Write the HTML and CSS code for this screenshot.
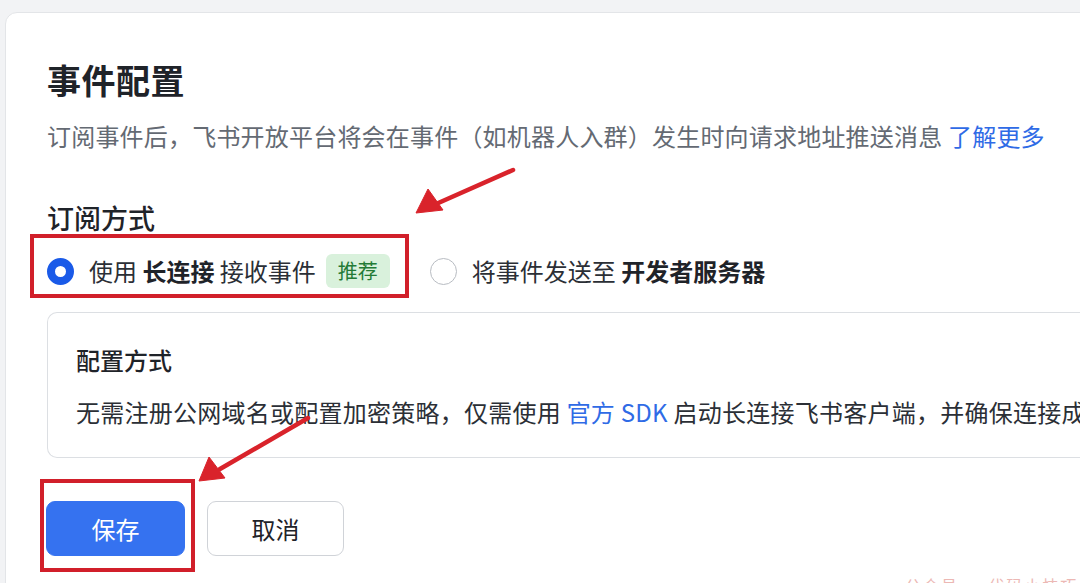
FILE: index.html
```html
<!DOCTYPE html>
<html lang="zh-CN">
<head>
<meta charset="utf-8">
<link rel="stylesheet" href="styles.css">
</head>
<body>
<div class="page">
  <div class="card">
    <h1 class="title">事件配置</h1>
    <p class="desc">订阅事件后，飞书开放平台将会在事件（如机器人入群）发生时向请求地址推送消息 <a class="link">了解更多</a></p>
    <h2 class="section">订阅方式</h2>
    <div class="radios">
      <label class="option">
        <span class="radio checked"></span>
        <span class="label">使用 <b>长连接</b> 接收事件</span>
        <span class="tag">推荐</span>
      </label>
      <label class="option">
        <span class="radio"></span>
        <span class="label">将事件发送至 <b>开发者服务器</b></span>
      </label>
    </div>
    <div class="panel">
      <div class="panel-title">配置方式</div>
      <div class="panel-text">无需注册公网域名或配置加密策略，仅需使用 <a class="link">官方 SDK</a> 启动长连接飞书客户端，并确保连接成</div>
    </div>
    <div class="actions">
      <button class="btn primary">保存</button>
      <button class="btn">取消</button>
    </div>
  </div>
</div>

<div class="mark mark-radio"></div>
<div class="mark mark-save"></div>
<svg class="arrows" width="1080" height="583" viewBox="0 0 1080 583">
  <g fill="#d9232b" stroke="#d9232b">
    <line x1="513" y1="170" x2="436" y2="204" stroke-width="4.5" stroke-linecap="round"/>
    <polygon points="416,213 428,189 443,210" stroke-width="1" stroke-linejoin="round"/>
    <line x1="308" y1="418" x2="220" y2="469" stroke-width="4.5" stroke-linecap="round"/>
    <polygon points="199,481 209,457 225,478" stroke-width="1" stroke-linejoin="round"/>
  </g>
</svg>
<div class="watermark">公众号 · 代码小技巧</div>
</body>
</html>
```

FILE: styles.css
```css
html, body {
  margin: 0;
  padding: 0;
}
body {
  width: 1080px;
  height: 583px;
  overflow: hidden;
  background: #f2f3f5;
  font-family: "Noto Sans CJK SC", "Noto Sans", sans-serif;
  color: #1f2329;
  position: relative;
}
.page {
  padding: 12px 0 0 5px;
}
.card {
  width: 1200px;
  height: 640px;
  box-sizing: border-box;
  background: #fff;
  border: 1px solid #e3e5e8;
  border-radius: 12px 0 0 0;
  padding: 47px 0 0 41px;
}
.title {
  margin: 0;
  font-size: 34px;
  line-height: 40px;
  font-weight: 600;
  color: #1f2329;
  letter-spacing: 0.5px;
}
.desc {
  margin: 20px 0 0;
  font-size: 24px;
  line-height: 32px;
  color: #646a73;
  white-space: nowrap;
  letter-spacing: 0.2px;
}
.link {
  color: #2f6be6;
  text-decoration: none;
}
.section {
  margin: 49px 0 0;
  font-size: 27px;
  line-height: 34px;
  font-weight: 500;
  color: #1f2329;
}
.radios {
  margin-top: 18px;
  display: flex;
  align-items: center;
  gap: 40px;
  height: 36px;
}
.option {
  display: flex;
  align-items: center;
}
.radio {
  width: 27px;
  height: 27px;
  box-sizing: border-box;
  border-radius: 50%;
  border: 1.5px solid #b8bcc2;
  background: #fff;
  margin-right: 15px;
  flex: none;
}
.radio.checked {
  border: 8px solid #1a5ae8;
}
.label {
  font-size: 24px;
  line-height: 32px;
  color: #2b2f36;
  white-space: nowrap;
}
.label b {
  font-weight: 700;
  color: #1f2329;
}
.tag {
  margin-left: 10px;
  height: 34px;
  padding: 0 12px;
  box-sizing: border-box;
  border-radius: 6px;
  background: #d9f1dc;
  color: #237a36;
  font-size: 20px;
  line-height: 34px;
}
.panel {
  margin-top: 23px;
  height: 146px;
  box-sizing: border-box;
  border: 1px solid #dcdfe3;
  border-radius: 10px 0 0 10px;
  border-right: none;
  padding: 32px 0 0 28px;
}
.panel-title {
  font-size: 24px;
  line-height: 30px;
  font-weight: 500;
  color: #1f2329;
}
.panel-text {
  margin-top: 22px;
  font-size: 24px;
  line-height: 30px;
  color: #2b2f36;
  white-space: nowrap;
  letter-spacing: 0.25px;
}
.actions {
  margin-top: 43px;
  display: flex;
  gap: 22px;
}
.btn {
  height: 55px;
  width: 137px;
  box-sizing: border-box;
  border-radius: 9px;
  border: 1.5px solid #d0d3d8;
  background: #fff;
  font-family: inherit;
  font-size: 24px;
  color: #1f2329;
  padding: 0;
}
.btn.primary {
  width: 139px;
  background: #3572f0;
  border-color: #3572f0;
  color: #fff;
  margin-left: -1px;
}
.mark {
  position: absolute;
  border: 4px solid #d11f2a;
  box-sizing: border-box;
}
.mark-radio {
  left: 30px;
  top: 234px;
  width: 379px;
  height: 64px;
}
.mark-save {
  left: 40px;
  top: 479px;
  width: 155px;
  height: 93px;
}
.arrows {
  position: absolute;
  left: 0;
  top: 0;
}
.watermark {
  position: absolute;
  left: 905px;
  top: 576px;
  font-size: 16px;
  line-height: 18px;
  color: #ecb8b4;
  letter-spacing: 2px;
  white-space: nowrap;
}
```
